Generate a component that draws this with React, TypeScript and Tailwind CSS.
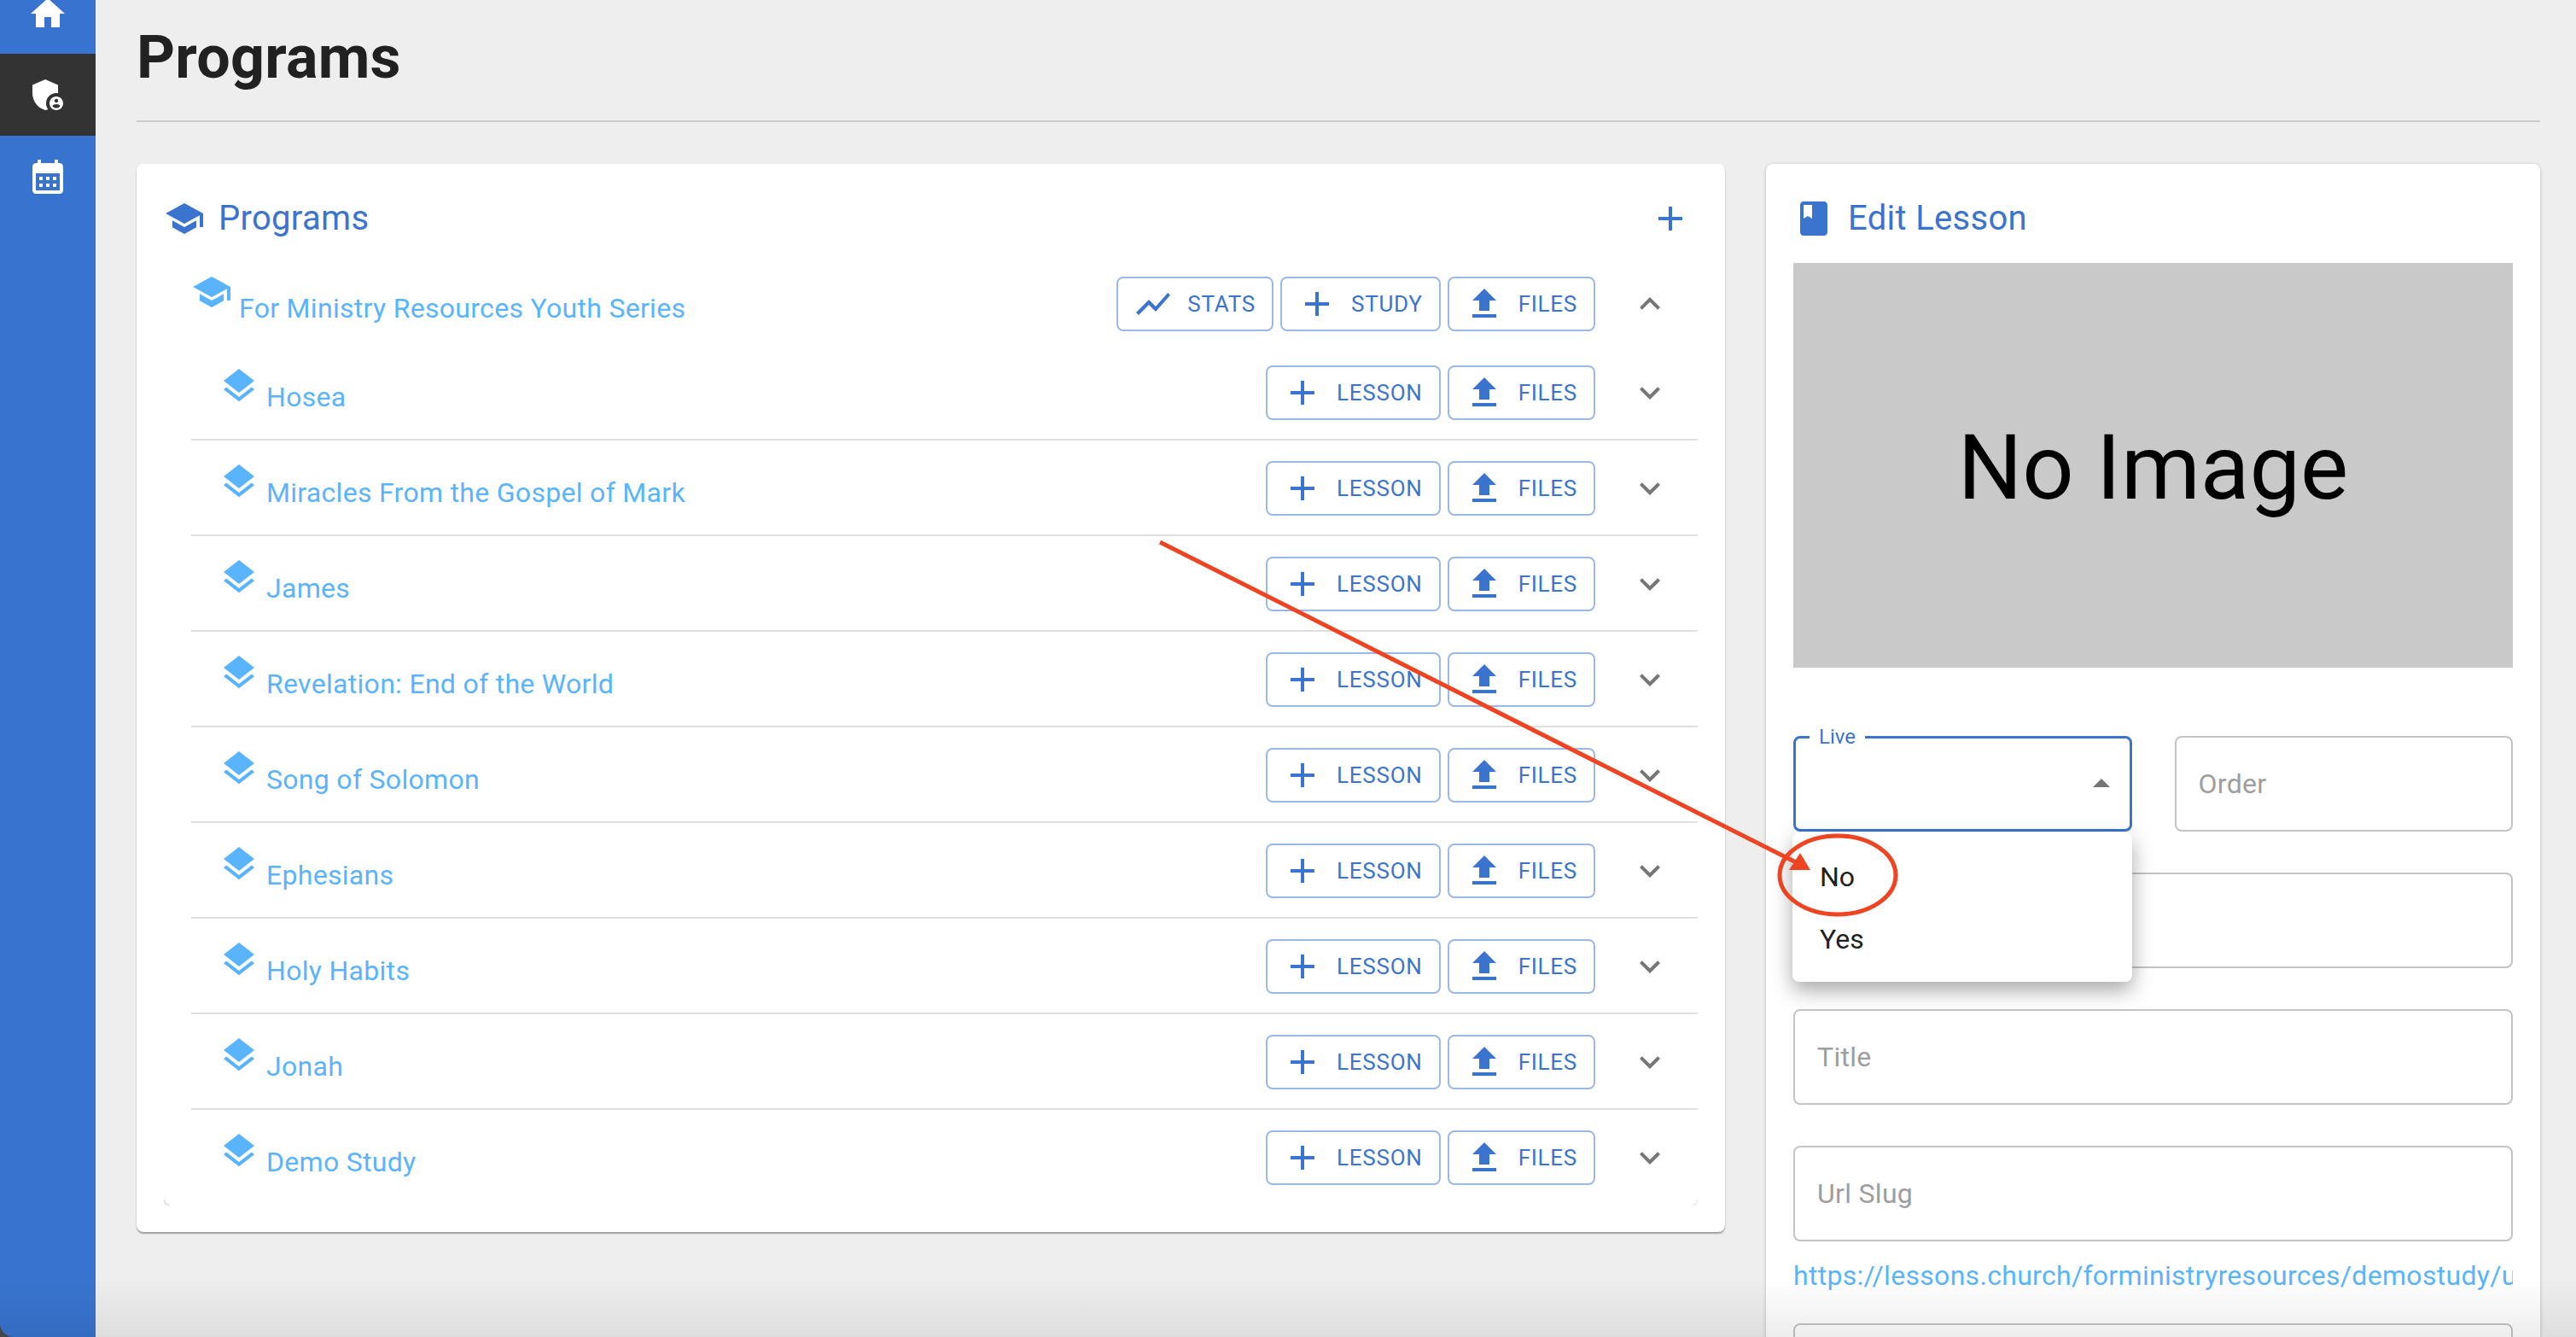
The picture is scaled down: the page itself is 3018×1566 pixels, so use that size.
const FONT = "font-['Roboto',sans-serif]";

const ICONS: Record<string, string> = {
  home: 'M10 20v-6h4v6h5v-8h3L12 3 2 12h3v8z',
  admin:
    'M17 11c.34 0 .67.04 1 .09V6.27L10.5 3 3 6.27v4.91c0 4.54 3.2 8.79 7.5 9.82.55-.13 1.08-.32 1.6-.55-.69-.98-1.1-2.17-1.1-3.45 0-3.31 2.69-6 6-6zM17 13c-2.21 0-4 1.79-4 4s1.79 4 4 4 4-1.79 4-4-1.79-4-4-4zm0 1.38c.62 0 1.12.51 1.12 1.12s-.51 1.12-1.12 1.12-1.12-.51-1.12-1.12.5-1.12 1.12-1.12zm0 5.37c-.93 0-1.74-.46-2.24-1.17.05-.72 1.51-1.08 2.24-1.08s2.19.36 2.24 1.08c-.5.71-1.31 1.17-2.24 1.17z',
  calendar:
    'M19 4h-1V2h-2v2H8V2H6v2H5c-1.11 0-1.99.9-1.99 2L3 20c0 1.1.89 2 2 2h14c1.1 0 2-.9 2-2V6c0-1.1-.9-2-2-2zm0 16H5V10h14v10zM9 14H7v-2h2v2zm4 0h-2v-2h2v2zm4 0h-2v-2h2v2zm-8 4H7v-2h2v2zm4 0h-2v-2h2v2zm4 0h-2v-2h2v2z',
  school: 'M5 13.18v4L12 21l7-3.82v-4L12 17l-7-3.82zM12 3 1 9l11 6 9-4.91V17h2V9L12 3z',
  layers:
    'm11.99 18.54-7.37-5.73L3 14.07l9 7 9-7-1.63-1.27zM12 16l7.36-5.73L21 9l-9-7-9 7 1.63 1.27L12 16z',
  chart: 'M3.5 18.49l6-6.01 4 4L22 6.92l-1.41-1.41-7.09 7.97-4-4L2 16.99z',
  add: 'M19 13h-6v6h-2v-6H5v-2h6V5h2v6h6v2z',
  upload: 'M5 20h14v-2H5v2zm0-10h4v6h6v-6h4l-7-7-7 7z',
  more: 'M16.59 8.59 12 13.17 7.41 8.59 6 10l6 6 6-6z',
  less: 'm12 8-6 6 1.41 1.41L12 10.83l4.59 4.58L18 14z',
  book: 'M18 2H6c-1.1 0-2 .9-2 2v16c0 1.1.9 2 2 2h12c1.1 0 2-.9 2-2V4c0-1.1-.9-2-2-2zM6 4h5v8l-2.5-1.5L6 12V4z',
  dropUp: 'M7 14l5-5 5 5z',
};

function Icon({ name, className }: { name: string; className: string }) {
  return (
    <svg viewBox="0 0 24 24" fill="currentColor" className={`shrink-0 ${className}`}>
      <path d={ICONS[name]} />
    </svg>
  );
}

function ActionButton({ icon, label }: { icon: string; label: string }) {
  return (
    <button className="flex h-16 items-center rounded-lg border-2 border-[#9bb9e8] pl-[17px] pr-[19px] text-[#3a74cf]">
      <Icon name={icon} className="h-12 w-12" />
      <span className="ml-[16px] text-[26px] tracking-[0.74px]">{label}</span>
    </button>
  );
}

function Row({ title, last }: { title: string; last?: boolean }) {
  return (
    <div className={`ml-8 flex h-28 items-start pt-6 ${last ? '' : 'border-b-2 border-[#e0e0e0]'}`}>
      <Icon name="layers" className="ml-8 h-12 w-12 text-[#5ab4fc]" />
      <span className="ml-[8px] mt-[13px] text-[32px] leading-[48px] tracking-[0.3px] text-[#5ab4fc]">{title}</span>
      <div className="ml-auto flex gap-2">
        <ActionButton icon="add" label="LESSON" />
        <ActionButton icon="upload" label="FILES" />
      </div>
      <Icon name="more" className="ml-[40px] mr-[32px] mt-2 h-12 w-12 text-[#757575]" />
    </div>
  );
}

function Field({ label, className }: { label?: string; className?: string }) {
  return (
    <div className={`flex h-[112px] items-center rounded-lg border-2 border-[#c4c4c4] bg-white px-[26px] text-[32px] tracking-[0.3px] text-[#9e9e9e] ${className ?? ''}`}>
      {label}
    </div>
  );
}

const STUDIES = [
  'Hosea',
  'Miracles From the Gospel of Mark',
  'James',
  'Revelation: End of the World',
  'Song of Solomon',
  'Ephesians',
  'Holy Habits',
  'Jonah',
  'Demo Study',
];

export default function App() {
  return (
    <div className={`relative flex h-[1566px] w-[3018px] overflow-hidden bg-[#eeeeee] ${FONT}`}>
      <div className="w-[112px] shrink-0 bg-[#4a4a4a]">
        <nav className="h-full rounded-bl-[16px] bg-[#3874cf] text-white">
          <div className="flex h-[63px] items-end justify-center">
            <Icon name="home" className="mb-[23px] h-12 w-12" />
          </div>
          <div className="flex h-24 items-center justify-center bg-[#333333]">
            <Icon name="admin" className="h-12 w-12" />
          </div>
          <div className="flex h-24 items-center justify-center">
            <Icon name="calendar" className="h-12 w-12" />
          </div>
        </nav>
      </div>

      <main className="min-w-0 flex-1 pl-12 pr-[42px]">
        <h1 className="flex h-[143px] items-center border-b-2 border-[#cccccc] pb-[6px] text-[70px] font-bold tracking-[0.25px] text-[#212121]">
          Programs
        </h1>

        <div className="mt-[49px] flex items-start gap-[47px]">
          <section className="relative h-[1251px] w-[1862px] rounded-lg bg-white pl-[32px] pr-[32px] pt-[40px] shadow-[0_2px_2px_rgba(0,0,0,0.35)]">
            <header className="flex h-12 items-center text-[#3a74cf]">
              <Icon name="school" className="h-12 w-12" />
              <span className="ml-[16px] text-[40px] leading-none tracking-[0.3px]">Programs</span>
              <Icon name="add" className="ml-auto mr-[8px] h-12 w-12" />
            </header>
            <div className="mt-[44px] flex h-16 items-start">
              <Icon name="school" className="ml-8 -mt-[6px] h-12 w-12 text-[#5ab4fc]" />
              <span className="ml-[8px] mt-[13px] text-[32px] leading-[48px] tracking-[0.3px] text-[#5ab4fc]">
                For Ministry Resources Youth Series
              </span>
              <div className="ml-auto flex gap-2">
                <ActionButton icon="chart" label="STATS" />
                <ActionButton icon="add" label="STUDY" />
                <ActionButton icon="upload" label="FILES" />
              </div>
              <Icon name="less" className="ml-[40px] mr-[32px] mt-2 h-12 w-12 text-[#757575]" />
            </div>
            <div className="mt-4">
              {STUDIES.map((s, i) => (
                <Row key={s} title={s} last={i === STUDIES.length - 1} />
              ))}
            </div>
            {/* faint corners of the inner table box */}
            <div className="absolute left-[32px] top-[1213px] h-[7px] w-[6px] rounded-bl-[6px] border-b border-l border-[#cfcfcf]" />
            <div className="absolute right-[32px] top-[1213px] h-[7px] w-[6px] rounded-br-[6px] border-b border-r border-[#e4e4e4]" />
          </section>

          <section className="relative ml-px h-[1500px] w-[907px] shrink-0 rounded-lg bg-white px-8 pt-[40px] shadow-[0_1px_4px_rgba(0,0,0,0.22)]">
            <header className="flex h-12 items-center text-[#3a74cf]">
              <Icon name="book" className="h-12 w-12" />
              <span className="ml-[16px] text-[40px] leading-none tracking-[0.3px]">Edit Lesson</span>
            </header>
            <div className="mt-[28px] flex h-[474px] items-center justify-center bg-[#c9c9c9] pt-[6px] text-[106px] text-black">
              No Image
            </div>
            <div className="mt-[80px] grid grid-cols-2 gap-x-[50px]">
              <div className="relative flex h-[112px] items-center justify-end rounded-lg border-[3px] border-[#3a74cf] pr-[14px] text-[#757575]">
                <span className="absolute -top-[14px] left-[16px] bg-white px-[11px] text-[24px] leading-[24px] text-[#3a74cf]">Live</span>
                <Icon name="dropUp" className="-mr-[5px] h-12 w-12" />
              </div>
              <Field label="Order" />
            </div>
            <Field className="mt-[48px]" />
            <Field label="Title" className="mt-[48px]" />
            <Field label="Url Slug" className="mt-[48px]" />
            <div className="mt-[21px] overflow-hidden whitespace-nowrap text-[32px] leading-[38px] tracking-[0.3px] text-[#5ab4fc]">
              https://lessons.church/forministryresources/demostudy/untitled-lesson
            </div>
            <Field className="mt-[37px]" />

            <div className="absolute left-[31px] top-[783px] flex h-[175px] w-[398px] flex-col rounded-lg bg-white pl-[32px] pt-[15px] text-[32px] text-[#212121] shadow-[0_10px_24px_rgba(0,0,0,0.35)]">
              <div className="flex h-[73px] items-center">No</div>
              <div className="flex h-[73px] items-center">Yes</div>
            </div>
          </section>
        </div>
      </main>

      {/* screenshot annotation: arrow and ring round "No" */}
      <svg className="pointer-events-none absolute left-0 top-0" width="3018" height="1566" fill="none">
        <line x1="1359" y1="635" x2="2108" y2="1012" stroke="#ee4422" strokeWidth="5" />
        <polygon points="2121,1019 2096,1019 2109,999" fill="#ee4422" />
        <ellipse cx="2153" cy="1025" rx="68" ry="46" stroke="#ee4422" strokeWidth="5" />
      </svg>
      <div className="pointer-events-none absolute bottom-0 left-0 h-[70px] w-full bg-gradient-to-b from-transparent to-[rgba(0,0,0,0.07)]" />
    </div>
  );
}
